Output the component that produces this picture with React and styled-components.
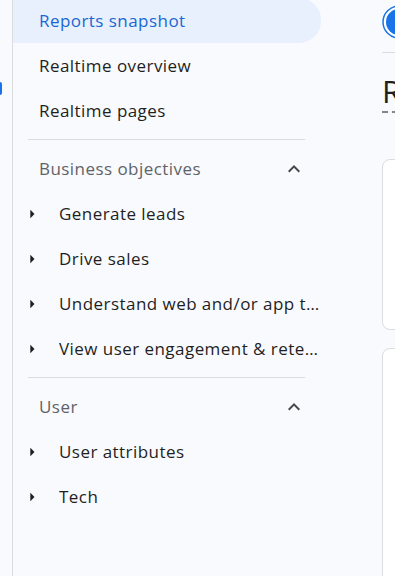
import React from 'react';
import styled, { createGlobalStyle } from 'styled-components';

const GlobalStyle = createGlobalStyle`
    html, body {
        margin: 0;
        padding: 0;
        background: #f8fafd;
        overflow: hidden;
    }
    body {
        font-family: "Open Sans", Roboto, sans-serif;
        color: #1f1f1f;
    }
`;

const Page = styled.div`
    display: flex;
    height: 576px;
    width: 395px;
    overflow: hidden;
`;

const Rail = styled.div`
    flex: 0 0 13px;
    border-right: 1px solid #dadce0;
    display: flex;
    flex-direction: column;
    padding-top: 82px;
    box-sizing: border-box;
`;

const RailMark = styled.div`
    width: 2px;
    height: 13px;
    border-radius: 0 2px 2px 0;
    background: #1a73e8;
`;

const Nav = styled.nav`
    flex: none;
    width: 308px;
    margin-right: 61px;
    margin-top: -2px;
    display: flex;
    flex-direction: column;
    font-size: 17px;
    letter-spacing: 0.45px;
`;

const Item = styled.div`
    height: 45px;
    display: flex;
    align-items: center;
    padding-left: 26px;
    color: ${(props) => (props.active ? '#1967d2' : '#1f1f1f')};
    background: ${(props) => (props.active ? '#e8f0fe' : 'transparent')};
    border-radius: 0 22px 22px 0;
`;

const Divider = styled.hr`
    border: none;
    border-top: 1px solid #dadce0;
    margin: 6px 16px 6px 15px;
`;

const Header = styled.div`
    height: 45px;
    display: flex;
    align-items: center;
    justify-content: space-between;
    padding: 0 15px 0 26px;
    color: #5f6368;
`;

const Branch = styled.div`
    height: 45px;
    display: flex;
    align-items: center;
    gap: 17px;
    padding: 0 0 0 9px;
    overflow: hidden;
`;

const Label = styled.span`
    flex: 1;
    min-width: 0;
    white-space: nowrap;
    overflow: hidden;
    text-overflow: ellipsis;
`;

const Main = styled.main`
    flex: 1;
    min-width: 0;
    overflow: hidden;
`;

const Inner = styled.div`
    width: 600px;
`;

const TopBar = styled.div`
    height: 53px;
    border-bottom: 1px solid #dadce0;
    display: flex;
    align-items: center;
    padding-bottom: 8px;
    box-sizing: border-box;
`;

const Title = styled.h1`
    margin: 18px 0 0;
    display: inline-block;
    font-size: 31px;
    font-weight: 400;
    line-height: 40px;
    color: #1f1f1f;
    border-bottom: 2px dashed #80868b;
`;

const Card = styled.div`
    background: #fff;
    border: 1px solid #dadce0;
    border-radius: 8px;
    height: ${(props) => props.h}px;
    margin-top: ${(props) => props.top}px;
`;

const ArrowRight = () => (
    <svg width="20" height="20" viewBox="0 0 24 24" fill="#1f1f1f">
        <path d="M10 17l5-5-5-5v10z" />
    </svg>
);

const ChevronUp = () => (
    <svg width="24" height="24" viewBox="0 0 24 24" fill="#444746">
        <path d="M12 8l-6 6 1.41 1.41L12 10.83l4.59 4.58L18 14z" />
    </svg>
);

const Avatar = () => (
    <svg width="34" height="34" viewBox="0 0 34 34">
        <circle cx="17" cy="17" r="16" fill="#fff" stroke="#1a73e8" strokeWidth="1.5" />
        <circle cx="17" cy="17" r="13" fill="#1a73e8" />
    </svg>
);

const App = () => {
    return (
        <Page>
            <GlobalStyle />
            <Rail>
                <RailMark />
            </Rail>
            <Nav>
                <Item active>Reports snapshot</Item>
                <Item>Realtime overview</Item>
                <Item>Realtime pages</Item>
                <Divider />
                <Header>
                    Business objectives
                    <ChevronUp />
                </Header>
                <Branch><ArrowRight /><Label>Generate leads</Label></Branch>
                <Branch><ArrowRight /><Label>Drive sales</Label></Branch>
                <Branch><ArrowRight /><Label>Understand web and/or app traffic</Label></Branch>
                <Branch><ArrowRight /><Label>View user engagement &amp; retention</Label></Branch>
                <Divider />
                <Header>
                    User
                    <ChevronUp />
                </Header>
                <Branch><ArrowRight /><Label>User attributes</Label></Branch>
                <Branch><ArrowRight /><Label>Tech</Label></Branch>
            </Nav>
            <Main>
                <Inner>
                    <TopBar>
                        <Avatar />
                    </TopBar>
                    <Title>Reports snapshot</Title>
                    <Card top={46} h={169} />
                    <Card top={18} h={400} />
                </Inner>
            </Main>
        </Page>
    );
};

export default App;
